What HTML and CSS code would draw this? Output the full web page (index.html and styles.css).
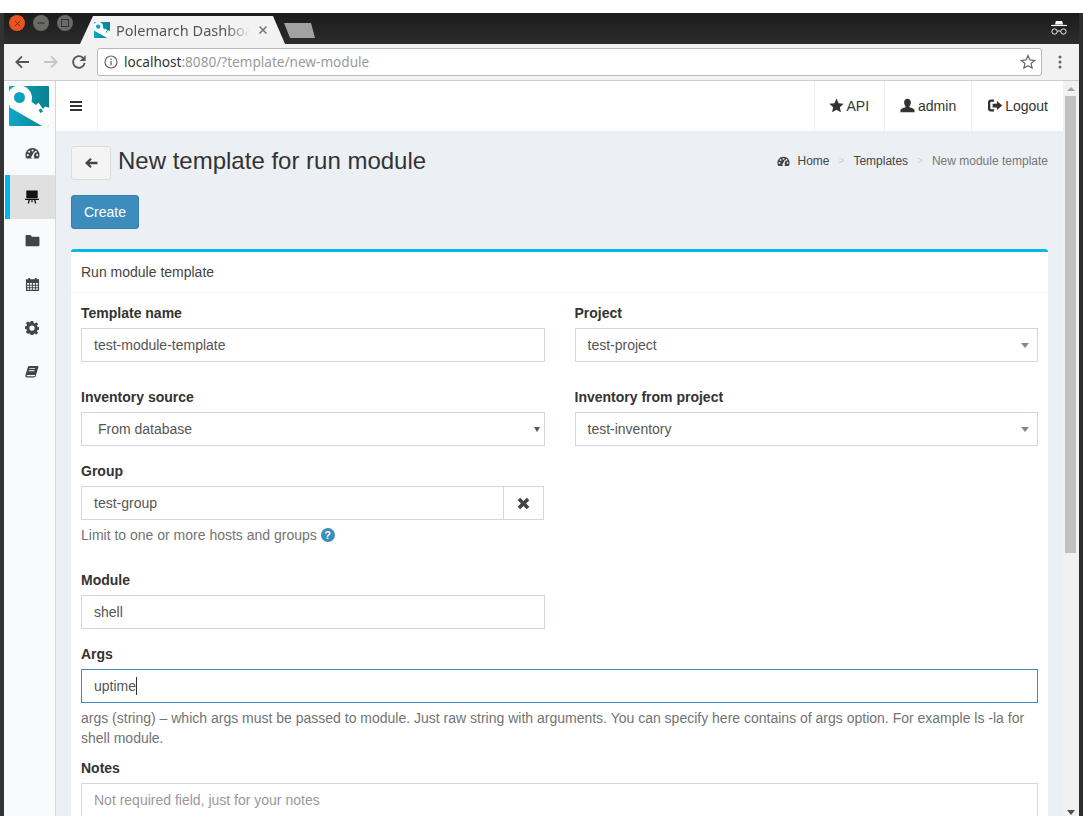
FILE: index.html
```html
<!DOCTYPE html>
<html lang="en">
<head>
<meta charset="utf-8">
<title>Polemarch Dashboard</title>
<link rel="stylesheet" href="styles.css">
</head>
<body>
<div class="window">
  <div class="titlebar">
    <div class="controls">
      <span class="ctl ctl-close"><svg viewBox="0 0 8 8" width="7" height="7"><path d="M1 1l6 6M7 1L1 7" stroke="#6b2a10" stroke-width="1.1"/></svg></span>
      <span class="ctl"><svg viewBox="0 0 8 8" width="8" height="8"><path d="M0.5 4h7" stroke="#333" stroke-width="1.2"/></svg></span>
      <span class="ctl"><svg viewBox="0 0 8 8" width="8" height="8"><rect x="0.5" y="0.5" width="7" height="7" fill="none" stroke="#333" stroke-width="1"/></svg></span>
    </div>
    <div class="tab">
      <svg class="favicon" viewBox="0 0 40 40" width="16" height="16"><use href="#logo"/></svg>
      <span class="tab-title">Polemarch Dashboard</span>
      <svg class="tab-x" viewBox="0 0 10 10" width="10" height="10"><path d="M1.500 1.500l7 7M8.500 1.500l-7 7" stroke="#777" stroke-width="1.6"/></svg>
    </div>
    <div class="newtab"></div>
    <div class="grow"></div>
    <svg class="incognito" viewBox="0 0 18 18" width="16" height="16"><path d="M5.500 1h7l1 4h-9z" fill="#fff"/><rect x="0" y="5.500" width="18" height="1.300" fill="#fff"/><circle cx="4" cy="13" r="3" fill="none" stroke="#fff" stroke-width="1"/><circle cx="14" cy="13" r="3" fill="none" stroke="#fff" stroke-width="1"/><path d="M7 12.700q2-1 4 0" fill="none" stroke="#fff"/></svg>
  </div>
  <div class="toolbar">
    <svg class="tool-icon" viewBox="0 0 16 16" width="16" height="16"><path d="M15 8H2.500M8 2.300L2.300 8 8 13.700" fill="none" stroke="#555" stroke-width="1.800"/></svg>
    <svg class="tool-icon" viewBox="0 0 16 16" width="16" height="16"><path d="M1 8h12.500M8 2.300L13.700 8 8 13.700" fill="none" stroke="#c4c4c4" stroke-width="1.800"/></svg>
    <svg class="tool-icon tool-reload" viewBox="0 0 16 16" width="16" height="16"><path d="M13.600 8.800A5.800 5.800 0 1 1 12 3.900" fill="none" stroke="#555" stroke-width="1.800"/><path d="M14.600 1v6h-6z" fill="#555"/></svg>
    <div class="omnibox">
      <svg class="info" viewBox="0 0 14 14" width="14" height="14"><circle cx="7" cy="7" r="6" fill="none" stroke="#666" stroke-width="1.200"/><path d="M7 6v4.200M7 3.600v1.400" stroke="#666" stroke-width="1.300"/></svg>
      <span class="url"><span class="url-host">localhost</span>:8080/?template/new-module</span>
      <svg class="url-star" viewBox="0 0 16 16" width="16" height="16"><path d="M8 1.600l1.900 4.300 4.700.5-3.500 3.100 1 4.600L8 11.800l-4.100 2.300 1-4.600-3.500-3.100 4.700-.5z" fill="none" stroke="#666" stroke-width="1.200"/></svg>
    </div>
    <svg class="dots" viewBox="0 0 4 14" width="4" height="14"><circle cx="2" cy="2" r="1.500" fill="#666"/><circle cx="2" cy="7" r="1.500" fill="#666"/><circle cx="2" cy="12" r="1.500" fill="#666"/></svg>
  </div>
  <div class="viewport">
    <div class="app">
      <aside class="sidebar">
        <div class="logo">
          <svg viewBox="0 0 40 40" width="40" height="40">
            <defs>
              <linearGradient id="tile" x1="0" y1="0" x2="1" y2="0"><stop offset="0" stop-color="#0fa8c8"/><stop offset="1" stop-color="#0a7f8e"/></linearGradient>
              <clipPath id="tile-clip"><rect width="40" height="40" rx="1"/></clipPath>
              <g id="logo">
                <rect width="40" height="40" rx="1" fill="url(#tile)"/>
                <g clip-path="url(#tile-clip)">
                  <circle cx="10.500" cy="12" r="12.500" fill="#fff"/>
                  <path d="M0 21L33 40H41V22L36 20.500L34 23L29.500 16.500L27 19L20 14z" fill="#fff"/>
                  <circle cx="10.500" cy="11.500" r="5.500" fill="#0da3c0"/>
                  <path d="M29.500 24l2.500-1.500 2 3-2.500 1.500z" fill="#0b8a9e"/>
                </g>
              </g>
            </defs>
            <use href="#logo"/>
          </svg>
        </div>
        <nav class="side-nav">
          <a class="side-item"><svg viewBox="0 0 16 16" width="15" height="15"><path fill-rule="evenodd" d="M8 2a7.500 7.500 0 0 0-6.400 11.400h12.800A7.500 7.500 0 0 0 8 2zM8 3.600a1.100 1.100 0 1 1 0 2.200 1.100 1.100 0 0 1 0-2.200zM4.400 5a1.100 1.100 0 1 1 0 2.200 1.100 1.100 0 0 1 0-2.200zM11.600 5a1.100 1.100 0 1 1 0 2.200 1.100 1.100 0 0 1 0-2.200zM3 8.600a1.100 1.100 0 1 1 0 2.200 1.100 1.100 0 0 1 0-2.200zM13 8.600a1.100 1.100 0 1 1 0 2.200 1.100 1.100 0 0 1 0-2.200zM9.800 5.800l.9.3-1.400 4.600a1.600 1.600 0 1 1-2-.1z" fill="#444"/></svg></a>
          <a class="side-item side-active"><svg viewBox="0 0 16 16" width="14" height="14"><path d="M1.500 .5h13v9h-13zM0 10h16v1.500H0zM3.900 11.500h1.600L4.700 15.500H3.200zM10.500 11.500h1.600l.7 4h-1.500zM7.300 11.500h1.400V14H7.300z" fill="#111"/></svg></a>
          <a class="side-item"><svg viewBox="0 0 16 16" width="15" height="15"><path d="M1.600 2h4.200l1.500 2h7.100c.6 0 1 .4 1 1v8c0 .6-.4 1-1 1H1.600c-.6 0-1-.4-1-1V3c0-.6.4-1 1-1z" fill="#444"/></svg></a>
          <a class="side-item"><svg viewBox="0 0 16 16" width="15" height="15"><path fill-rule="evenodd" d="M1 2.500h2.500V1h2v1.500h5V1h2v1.500H15V15H1zM2.300 6.500v1.800h2V6.500zM5.200 6.500v1.800h2.200V6.500zM8.400 6.500v1.800h2.200V6.500zM11.600 6.500v1.800h2.100V6.500zM2.300 9.200V11h2V9.200zM5.200 9.200V11h2.200V9.200zM8.400 9.200V11h2.200V9.200zM11.600 9.200V11h2.100V9.200zM2.300 11.900v1.800h2v-1.800zM5.200 11.900v1.800h2.200v-1.800zM8.400 11.900v1.800h2.200v-1.800zM11.600 11.900v1.800h2.100v-1.800z" fill="#444"/></svg></a>
          <a class="side-item"><svg viewBox="0 0 16 16" width="14" height="14"><path fill-rule="evenodd" d="M6.600 0h2.800l.4 2.200 1.300.6L13 1.500l2 2-1.300 1.900.6 1.300 2.200.4v2.800l-2.200.4-.6 1.300 1.300 1.900-2 2-1.900-1.300-1.300.6-.4 2.200H6.600l-.4-2.200-1.300-.6L3 14.500l-2-2 1.300-1.900-.6-1.300L-.5 8.900V6.100l2.200-.4.6-1.300L1 2.500l2-2 1.900 1.300 1.300-.6zM8 5a3 3 0 1 0 0 6 3 3 0 0 0 0-6z" fill="#444"/></svg></a>
          <a class="side-item"><svg viewBox="0 0 16 16" width="14" height="14"><path fill-rule="evenodd" d="M4.600 1H15l.4.900-3 10.400c-.3 1.200-1.200 1.900-2.300 1.900H2.300C1 14.200 0 13 .5 11.300L3.400 2c.2-.6.6-1 1.200-1zM5.200 3.600l-.3 1h6.400l.3-1zM4.400 6l-.3 1h6.400l.3-1zM2.200 11.400c-.3 1 .1 1.500.8 1.500h7.600c.5 0 .9-.3 1-.8l.2-.7z" fill="#444"/></svg></a>
        </nav>
      </aside>
      <div class="main">
        <header class="topbar">
          <a class="burger"><svg viewBox="0 0 12 10" width="12" height="10"><path d="M0 0h12v2H0zM0 4h12v2H0zM0 8h12v2H0z" fill="#333"/></svg></a>
          <div class="grow"></div>
          <a class="top-link"><svg viewBox="0 0 16 16" width="15" height="15"><path d="M8 .6l2.200 5 5.400.6-4 3.700 1.100 5.400L8 12.600l-4.700 2.700 1.100-5.400-4-3.700 5.400-.6z" fill="#333"/></svg>API</a>
          <a class="top-link top-admin"><svg viewBox="0 0 16 16" width="15" height="15"><path d="M8 .8c2.300 0 3.600 1.800 3.600 4 0 1.500-.6 3-1.500 3.900v1.200c2.300.7 5.400 1.400 5.400 3.600v1.600H.5v-1.600c0-2.200 3.100-2.900 5.400-3.600V8.700C5 7.800 4.400 6.300 4.400 4.800c0-2.200 1.300-4 3.600-4z" fill="#333"/></svg>admin</a>
          <a class="top-link top-logout"><svg viewBox="0 0 16 16" width="16" height="15"><path d="M7 1.500H3.500C1.800 1.500.5 2.800.5 4.500v7c0 1.700 1.300 3 3 3H7V12H3.700c-.4 0-.7-.3-.7-.7V4.700c0-.4.3-.7.700-.7H7z" fill="#333"/><path d="M10 3.200L15.800 8 10 12.800V10H5.500V6H10z" fill="#333"/></svg>Logout</a>
        </header>
        <main class="content">
          <div class="page-head">
            <a class="back-btn"><svg viewBox="0 0 14 12" width="14" height="12"><path d="M6.300 1L1 6l5.300 5 1.500-1.500-2.400-2.300H13.500V4.800H5.400l2.400-2.300z" fill="#444"/></svg></a>
            <h1 class="page-title">New template for run module</h1>
            <ol class="breadcrumb">
              <li class="crumb-link"><svg viewBox="0 0 16 16" width="13" height="13"><path fill-rule="evenodd" d="M8 2a7.500 7.500 0 0 0-6.400 11.400h12.800A7.500 7.500 0 0 0 8 2zM8 3.600a1.100 1.100 0 1 1 0 2.200 1.100 1.100 0 0 1 0-2.200zM4.400 5a1.100 1.100 0 1 1 0 2.200 1.100 1.100 0 0 1 0-2.200zM11.600 5a1.100 1.100 0 1 1 0 2.200 1.100 1.100 0 0 1 0-2.200zM3 8.600a1.100 1.100 0 1 1 0 2.200 1.100 1.100 0 0 1 0-2.200zM13 8.600a1.100 1.100 0 1 1 0 2.200 1.100 1.100 0 0 1 0-2.200zM9.800 5.800l.9.3-1.400 4.600a1.600 1.600 0 1 1-2-.1z" fill="#444"/></svg><span>Home</span></li>
              <li class="crumb-sep">&gt;</li>
              <li class="crumb-link"><span>Templates</span></li>
              <li class="crumb-sep">&gt;</li>
              <li class="crumb-current">New module template</li>
            </ol>
          </div>
          <button class="create-btn" type="button">Create</button>
          <section class="card">
            <div class="card-head">Run module template</div>
            <div class="card-body">
              <div class="row row-a">
                <div class="field"><label class="label">Template name</label><div class="input">test-module-template</div></div>
                <div class="field"><label class="label">Project</label><div class="input select2"><span>test-project</span><i class="arrow"></i></div></div>
              </div>
              <div class="row row-b">
                <div class="field"><label class="label">Inventory source</label><div class="input native-select"><span>From database</span><i class="arrow arrow-dark"></i></div></div>
                <div class="field"><label class="label">Inventory from project</label><div class="input select2"><span>test-inventory</span><i class="arrow"></i></div></div>
              </div>
              <div class="row row-c">
                <div class="field">
                  <label class="label">Group</label>
                  <div class="input-group">
                    <div class="input">test-group</div>
                    <a class="addon"><svg viewBox="0 0 12 12" width="13" height="13"><path d="M3 .6L6 3.600 9 .6 11.400 3 8.400 6l3 3L9 11.400l-3-3-3 3L.6 9l3-3-3-3z" fill="#444"/></svg></a>
                  </div>
                  <p class="help help-first">Limit to one or more hosts and groups <span class="q">?</span></p>
                </div>
              </div>
              <div class="row row-d">
                <div class="field"><label class="label">Module</label><div class="input">shell</div></div>
              </div>
              <div class="field-wide">
                <label class="label">Args</label>
                <div class="input input-focus">uptime<i class="caret"></i></div>
                <p class="help help-first">args (string) – which args must be passed to module. Just raw string with arguments. You can specify here contains of args option. For example ls -la for shell module.</p>
              </div>
              <div class="field-wide field-notes">
                <label class="label">Notes</label>
                <div class="input placeholder">Not required field, just for your notes</div>
              </div>
            </div>
          </section>
        </main>
      </div>
    </div>
    <div class="scrollbar">
      <i class="sb-up"></i>
      <div class="sb-thumb"></div>
      <div class="grow"></div>
      <i class="sb-down"></i>
    </div>
  </div>
</div>
</body>
</html>
```
FILE: styles.css
```css
* { box-sizing: border-box; }
html, body { margin: 0; padding: 0; height: 100%; overflow: hidden; background: #fff; }
body { font-family: "Liberation Sans", Arial, sans-serif; font-size: 14px; line-height: 20px; color: #333; }
svg { display: block; flex: none; }
.grow { flex: 1 1 auto; }
.window { margin-top: 13px; height: 803px; display: flex; flex-direction: column; overflow: hidden; background: #2a2a2a; border-left: 4px solid #333; border-right: 4px solid #2c2c2c; }

.titlebar { height: 31px; flex: none; display: flex; align-items: flex-end; background: linear-gradient(#1b1b1b, #2d2d2d); }
.controls { display: flex; gap: 8px; align-self: flex-start; padding: 2px 0 0 5px; }
.ctl { width: 16px; height: 16px; border-radius: 50%; background: #6a6a68; display: flex; align-items: center; justify-content: center; }
.ctl-close { background: #e95420; }
.tab { width: 205px; height: 28px; margin-left: 7px; display: flex; align-items: center; padding: 0 0 0 14px; gap: 6px; background: #f2f2f2; clip-path: polygon(0 100%, 13px 0, 193px 0, 100% 100%); }
.tab-title { font-family: "Noto Sans", sans-serif; font-size: 14.5px; color: #555; white-space: nowrap; overflow: hidden; width: 135px; flex: none; -webkit-mask-image: linear-gradient(90deg, #000 110px, transparent 134px); mask-image: linear-gradient(90deg, #000 110px, transparent 134px); }
.tab-x { margin-left: 1px; }
.newtab { width: 31px; height: 15px; margin: 0 0 6px -1px; background: #a2a2a2; clip-path: polygon(0 0, 27px 0, 100% 100%, 6px 100%); }
.incognito { margin: 0 12px 8px 0; }

.toolbar { height: 37px; flex: none; display: flex; align-items: center; background: #f2f2f2; border-bottom: 1px solid #ccc; padding: 0 17px 1px 10px; }
.tool-icon { margin-right: 13px; }
.tool-reload { margin-left: -1px; }
.omnibox { flex: 1 1 auto; height: 28px; margin: 0 16px 0 -3px; display: flex; align-items: center; background: #fff; border: 1px solid #b8b8b8; border-radius: 3px; padding: 0 5px 0 6px; }
.info { margin-right: 6px; }
.url { flex: 1 1 auto; font-family: "Noto Sans", sans-serif; font-size: 13.6px; color: #9a9a9a; }
.url-host { color: #333; }

.viewport { flex: 1 1 auto; min-height: 0; display: flex; background: #ecf0f5; }
.app { flex: 1 1 auto; min-width: 0; display: flex; }
.sidebar { width: 52px; flex: none; background: #f9fafc; border-right: 1px solid #d2d6de; }
.logo { height: 51px; padding: 5px 0 0 5px; }
.side-nav { display: flex; flex-direction: column; }
.side-item { height: 44px; margin-left: 1px; margin-top: -.4px; display: flex; align-items: center; justify-content: center; padding-left: 4px; }
.side-active { background: #e0e0e0; border-left: 5px solid #00b9ea; padding-left: 0; padding-right: 1px; }

.main { flex: 1 1 auto; min-width: 0; display: flex; flex-direction: column; }
.topbar { height: 51px; flex: none; display: flex; background: #fff; border-bottom: 1px solid #e9edf1; }
.burger { width: 42px; display: flex; align-items: center; justify-content: center; padding-right: 1px; border-right: 1px solid #eee; }
.top-link { display: flex; align-items: center; gap: 2px; padding: 0 15px 0 14px; border-left: 1px solid #eee; color: #333; }
.top-link svg { margin-top: -2px; }
.top-admin { gap: 3px; padding-left: 15px; }
.top-logout { gap: 2px; padding-left: 15px; }

.content { flex: 1 1 auto; min-height: 0; padding: 14px 15px 0; background: #ecf0f5; }
.page-head { display: flex; align-items: center; height: 34px; }
.back-btn { width: 40px; height: 34px; display: flex; align-items: center; justify-content: center; background: #f4f4f4; border: 1px solid #ddd; border-radius: 3px; }
.page-title { margin: 0 0 4px 7px; flex: 1 1 auto; font-size: 24px; font-weight: 400; line-height: 30px; color: #333; }
.breadcrumb { list-style: none; margin: 0 0 4px; padding: 0; display: flex; align-items: center; gap: 9px; font-size: 12px; color: #777; }
.crumb-link { display: flex; align-items: center; gap: 8px; color: #444; }
.crumb-sep { color: #ccc; font-size: 10px; }
.create-btn { display: block; margin: 15px 0 20px; width: 68px; height: 34px; padding: 0; font: inherit; color: #fff; background: #3c8dbc; border: 1px solid #367fa9; border-radius: 3px; }

.card { background: #fff; border-top: 3px solid #00b9ea; border-radius: 3px 3px 0 0; }
.card-head { height: 41px; padding: 10px; border-bottom: 1px solid #f4f4f4; color: #444; }
.card-body { padding: 10px; }
.row { display: grid; grid-template-columns: 1fr 1fr; column-gap: 30px; }
.row-a { margin-bottom: 25px; }
.row-b { margin-bottom: 15px; }
.row-c { margin-bottom: 25px; }
.row-d { margin-bottom: 15px; }
.label { display: block; margin-bottom: 5px; font-weight: 700; color: #333; }
.input { height: 34px; padding: 6px 12px; background: #fff; border: 1px solid #d2d6de; color: #555; }
.select2 { display: flex; justify-content: space-between; align-items: center; }
.arrow { width: 0; height: 0; margin-right: -4px; border: solid transparent; border-width: 5px 4px 0; border-top-color: #888; }
.native-select { display: flex; justify-content: space-between; align-items: center; padding-left: 16px; }
.arrow-dark { border-width: 5px 3.500px 0; border-top-color: #555; margin-right: -8px; }
.input-group { display: flex; padding-right: 1px; }
.input-group .input { flex: 1 1 auto; border-right: 0; }
.addon { width: 41px; flex: none; display: flex; align-items: center; justify-content: center; border: 1px solid #d2d6de; }
.help { margin: 5px 0 0; color: #737373; display: block; }
.q { display: inline-block; width: 14px; height: 14px; border-radius: 50%; background: #3c8dbc; color: #fff; font-size: 11px; font-weight: 700; line-height: 14px; text-align: center; vertical-align: 1px; }
.input-focus { border-color: #3c8dbc; display: flex; align-items: center; }
.caret { width: 1px; height: 18px; background: #333; }
.field-wide { margin-bottom: 10px; }
.placeholder { color: #999; }

.scrollbar { width: 16px; flex: none; display: flex; flex-direction: column; align-items: flex-start; padding-left: 2px; background: #f1f1f1; }
.sb-up, .sb-down { width: 0; height: 0; margin: 6px 0 0 2px; border: solid transparent; border-width: 0 4px 4px; border-bottom-color: #a3a3a3; }
.sb-thumb { width: 11px; height: 457px; margin-top: 5px; background: #c0c0c0; }
.sb-down { margin: 0 0 1px 2px; border-width: 5px 4px 0; border-bottom-color: transparent; border-top-color: #505050; }
```
